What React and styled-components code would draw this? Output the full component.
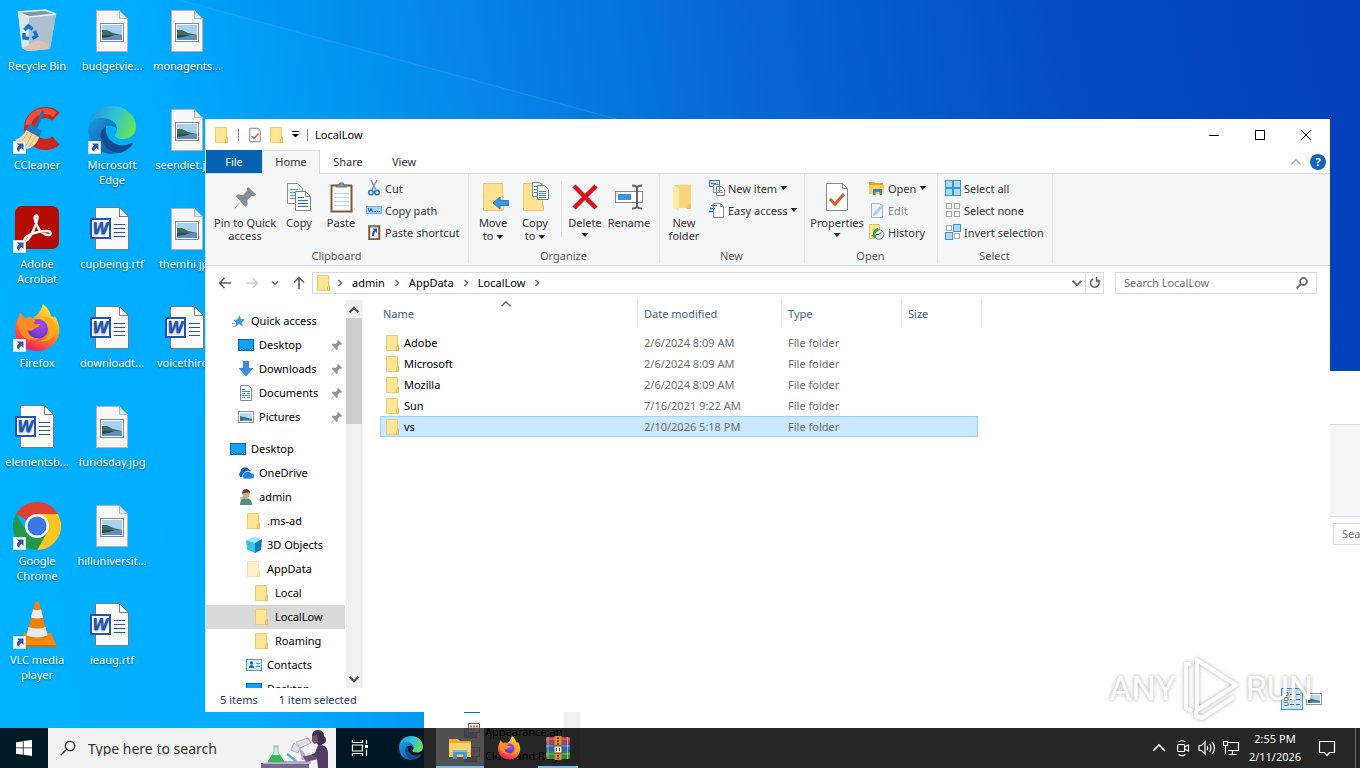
import React from 'react'
import styled, { createGlobalStyle } from 'styled-components'

/* ---------- icons ---------- */

function FolderIcon({ size = 16, faded }) {
  return (
    <svg width={size} height={size} viewBox='0 0 16 16' opacity={faded ? 0.5 : 1} aria-hidden='true'>
      <path d='M1.500 .5h11v9.500h1v5.500h-12z' fill='#ffe596' stroke='#eccb68' />
      <path d='M11.500 15.500v-3l1-2h1v5z' fill='#ffdc7a' stroke='#e5bd4c' />
    </svg>
  )
}

function ShortcutArrow() {
  return (
    <g>
      <rect x='0.5' y='35.5' width='12' height='12' fill='#fff' stroke='#d5dde5' />
      <path d='M4 37.500h6.500V44L8.600 42.100C6.800 43 6.200 44.200 6.400 46 3.200 44.200 3.200 41 6 39.500z' fill='#2c5aa0' />
    </g>
  )
}

function BinIcon() {
  return (
    <svg width='48' height='48' viewBox='0 0 48 48' aria-hidden='true'>
      <path d='M5 5l27-2 11 4-6 35-22 2-6-3z' fill='#c3d6e4' />
      <path d='M5 5l11 5 -1 34-6-3z' fill='#dbe7ef' />
      <path d='M16 10l27-3-6 35-21 2z' fill='#aebfce' />
      <path d='M15 38l10-5 11 4-1 5-19 2-7-3z' fill='#d9c5b8' />
      <path d='M5 5l27-2 11 4-27 3z' fill='#7d98ac' stroke='#e9f4fb' strokeWidth='1.500' />
      <g fill='none' stroke='#1373d1' strokeWidth='3.500'>
        <path d='M11.500 23l4-4 4 3.500' />
        <path d='M21.500 24l2 5-4 2.500' />
        <path d='M16 31.500l-5-.5 0-5' />
      </g>
    </svg>
  )
}

function JpgIcon() {
  return (
    <svg width='48' height='48' viewBox='0 0 48 48' aria-hidden='true'>
      <path d='M8.500 3.500h23l8 8v33h-31z' fill='#f7f7f7' stroke='#b9b4ae' />
      <path d='M31.500 3.500v8h8z' fill='#dff0fa' stroke='#a9b8c2' />
      <rect x='12.500' y='16.500' width='23' height='18' fill='#fff' stroke='#7c8a96' />
      <rect x='14' y='18' width='20' height='15' fill='#a8d1f0' />
      <path d='M14 23l5 0 6 3 9 2v1H14z' fill='#3f6b60' />
      <path d='M14 28h20v5H14z' fill='#5f8fbd' />
      <path d='M14 28h13l-6 2-7 1z' fill='#284a54' />
    </svg>
  )
}

function WordIcon() {
  return (
    <svg width='48' height='48' viewBox='0 0 48 48' aria-hidden='true'>
      <path d='M7.500 2.500h24l9 9v33h-33z' fill='#fafafa' stroke='#77797c' />
      <path d='M31.500 2.500v9h9z' fill='#fff' stroke='#77797c' />
      <path d='M26 19.500h11M26 23.500h11M26 27.500h11M26 31.500h11' stroke='#2b579a' />
      <rect x='3' y='14' width='19' height='19' fill='#fff' stroke='#2155b0' strokeWidth='2' />
      <text x='12.500' y='29' fontFamily='"DejaVu Sans", sans-serif' fontSize='15' fontWeight='700' fontStyle='italic' textAnchor='middle' fill='#2155b0'>W</text>
    </svg>
  )
}

function CCleanerIcon() {
  return (
    <svg width='48' height='48' viewBox='0 0 48 48' aria-hidden='true'>
      <path d='M43 10.500A16 16 0 1 0 43 34.500' fill='none' stroke='#c8281c' strokeWidth='11' />
      <path d='M42 8.500A17 17 0 0 0 15 19' fill='none' stroke='#e8513d' strokeWidth='6' />
      <path d='M30 5l-7 17' stroke='#2173b8' strokeWidth='3' />
      <path d='M17 18l12 7-3 6-13-7z' fill='#1f7cc4' />
      <path d='M13 24l13 7c-1 6-7 11-12 12-5-3-9-7-12-9 5-2 9-5 11-10z' fill='#f6d9a4' />
      <path d='M15 26L8 37M19 28l-6 12M23 30l-7 11' stroke='#d9b27a' />
      <ShortcutArrow />
    </svg>
  )
}

function EdgeIcon({ size = 48, shortcut }) {
  return (
    <svg width={size} height={size} viewBox='0 0 48 48' aria-hidden='true'>
      <defs>
        <linearGradient id='edgeTop' x1='0' y1='.3' x2='1' y2='.6'>
          <stop offset='0' stopColor='#2196dc' />
          <stop offset='.5' stopColor='#2fc0d8' />
          <stop offset='1' stopColor='#6be351' />
        </linearGradient>
        <linearGradient id='edgeLow' x1='0' y1='0' x2='1' y2='1'>
          <stop offset='0' stopColor='#1b9de2' />
          <stop offset='1' stopColor='#0d4f9e' />
        </linearGradient>
      </defs>
      <path d='M0 22C1 9 11 0 24 0c14 0 24 10 24 21 0 8-6 12-13 12-6 0-8-2-8-4 0-1 2-2 2-5 0-5-5-10-13-10C8 14 2 18 0 22z' fill='url(#edgeTop)' />
      <path d='M0 24c0-6 5-12 14-12 9 0 15 5 15 11-2-3-6-4-10-3-5 2-7 8-5 14 2 7 8 13 16 13C14 51 0 40 0 24z' fill='url(#edgeLow)' />
      <path d='M18 20c-5 3-7 9-4 15 3 8 10 12 17 12 6-1 11-5 14-9 0-1-1-1-2-1-4 2-8 3-12 2-9-2-14-9-13-19z' fill='#114a93' />
      {shortcut && <ShortcutArrow />}
    </svg>
  )
}

function AcrobatIcon() {
  return (
    <svg width='48' height='48' viewBox='0 0 48 48' aria-hidden='true'>
      <rect x='2' y='1' width='44' height='43' rx='7' fill='#b30b00' />
      <path d='M23.500 10.500c-3 0-2 5 .5 10 2 5 7 10 12 9.500 3-.5 2-4-2-4-6 0-12 1.500-17 3.500-4 2-6.500 4.500-5 6 2 1.500 6-4.500 9-11.500 2.500-6 5-13.500 2.500-13.500z' fill='none' stroke='#fff' strokeWidth='2.400' />
      <ShortcutArrow />
    </svg>
  )
}

function FirefoxIcon({ size = 48, shortcut }) {
  return (
    <svg width={size} height={size} viewBox='0 0 48 48' aria-hidden='true'>
      <defs>
        <linearGradient id='foxBody' x1='.8' y1='0' x2='.3' y2='1'>
          <stop offset='0' stopColor='#fff044' />
          <stop offset='.35' stopColor='#ffb320' />
          <stop offset='.65' stopColor='#ff6a2b' />
          <stop offset='1' stopColor='#f5156c' />
        </linearGradient>
        <radialGradient id='foxGlobe' cx='.6' cy='.3' r='.8'>
          <stop offset='0' stopColor='#b04ae8' />
          <stop offset='1' stopColor='#5038c8' />
        </radialGradient>
      </defs>
      <path d='M30 0c6 5 7 8 8 12 2 1 3 2 4 0 4 7 5 12 4 18-2 10-11 17-22 17C12 47 2 38 2 26c0-5 1-9 4-13l1-4 5 5c3-1 6-1 8 0 4-2 8-7 10-14z' fill='url(#foxBody)' />
      <circle cx='25' cy='25' r='10' fill='url(#foxGlobe)' />
      <path d='M5 14l2-5 5 5c5-1 8 0 11 3-2 1-3 2-1 3h5c-1 4-4 3-6 5-2 2-6 3-7-1 0 7 5 11 13 10-6 4-17 2-20-6-2-5-3-9-2-14z' fill='#ff8a26' />
      <path d='M27 13c7 1 10 7 10 12 0 7-5 12-12 12 10 2 18-4 18-13 0-7-6-13-16-11z' fill='#ffab21' />
      {shortcut && <ShortcutArrow />}
    </svg>
  )
}

function ChromeIcon() {
  return (
    <svg width='48' height='48' viewBox='0 0 48 48' aria-hidden='true'>
      <path d='M24 24L3.200 12A24 24 0 0 1 44.800 12z' fill='#de4032' />
      <path d='M24 12h20.800A24 24 0 0 1 24 48l10.400-18z' fill='#fcc51f' />
      <path d='M34.400 30L24 48A24 24 0 0 1 3.200 12l10.400 18z' fill='#229a48' />
      <circle cx='24' cy='24' r='12' fill='#fff' />
      <circle cx='24' cy='24' r='9.500' fill='#3b78e7' />
      <ShortcutArrow />
    </svg>
  )
}

function VlcIcon() {
  return (
    <svg width='48' height='48' viewBox='0 0 48 48' aria-hidden='true'>
      <path d='M11 32h27l6 14H4z' fill='#f58a0b' />
      <path d='M4 44h40v2H4z' fill='#d96d00' />
      <path d='M22 1q2-1.500 4 0l9 36q-11 6-22 0z' fill='#f07f0c' />
      <path d='M20 8.500q4 1.500 8 0l2 8q-6 2-12 0z' fill='#f1f1f1' />
      <path d='M15.500 26q8.500 3 17 0l2 8.500q-10.500 4-21 0z' fill='#e9e9e9' />
      <ShortcutArrow />
    </svg>
  )
}

function PinIcon({ size = 11, color = '#8c9298' }) {
  return (
    <svg width={size} height={size} viewBox='0 0 20 20' aria-hidden='true'>
      <path d='M13 0l7 7-2 1.500-2-.5-4 4 .5 4-2 2-4.500-4.500L1 19.500.5 19 6 13 1.500 8.500l2-2 4.500 1 4-4-.5-2z' fill={color} />
    </svg>
  )
}

function CopyIcon() {
  return (
    <svg width='32' height='32' viewBox='0 0 32 32' aria-hidden='true'>
      <path d='M4.500 2.500h10l5 5v15h-15z' fill='#fff' stroke='#8b9097' />
      <path d='M7 8.500h8M7 11.500h8M7 14.500h8M7 17.500h8' stroke='#4ba0e0' />
      <path d='M12.500 10.500h10l5 5v14h-15z' fill='#fff' stroke='#7c8188' />
      <path d='M22.500 10.500v5h5' fill='none' stroke='#7c8188' />
      <path d='M15 16.500h6M15 19.500h10M15 22.500h10M15 25.500h10' stroke='#1e78d0' />
    </svg>
  )
}

function PasteIcon({ size = 32, link }) {
  return (
    <svg width={size} height={size} viewBox='0 0 32 32' aria-hidden='true'>
      <rect x='6.500' y='4.500' width='20' height='26' fill='#fafcff' stroke='#7f5a36' strokeWidth={link ? 4 : 2} />
      <path d='M11 6V4h3l1-2h3l1 2h3v2z' fill='#8a9198' stroke='#6c7176' />
      {!link && <path d='M9 12.500h15M9 16.500h15M9 20.500h15M9 24.500h15' stroke='#b9d7ef' />}
      {link && <path d='M13 9h9v9l-3-3c-2 2-2 5-3 9h-4c0-6 1-9 4-12z' fill='#2b55b4' />}
    </svg>
  )
}

function CutIcon() {
  return (
    <svg width='16' height='16' viewBox='0 0 16 16' aria-hidden='true'>
      <path d='M11 0L6 10M5 0l5 10' stroke='#8796a6' strokeWidth='1.500' />
      <circle cx='5' cy='12.500' r='2.300' fill='none' stroke='#2d7ec4' strokeWidth='1.600' />
      <circle cx='11' cy='12.500' r='2.300' fill='none' stroke='#2d7ec4' strokeWidth='1.600' />
    </svg>
  )
}

function PathIcon() {
  return (
    <svg width='16' height='16' viewBox='0 0 16 16' aria-hidden='true'>
      <rect x='.5' y='4.500' width='15' height='7' fill='#a8d6fb' stroke='#6bb1e8' />
      <path d='M2 6l1.500 4L5 6.500 6.500 10l.5-1M8.500 9.500h1.500M11 9.500h1.500M13 9.500h1' fill='none' stroke='#12487d' />
    </svg>
  )
}

function MoveToIcon() {
  return (
    <svg width='32' height='32' viewBox='0 0 32 32' aria-hidden='true'>
      <path d='M6.500 2.500h19v22h1v5h-20z' fill='#ffe390' stroke='#e7c769' />
      <path d='M16 22l7-6v3.500h9v5h-9V28z' fill='#3f97dd' stroke='#277cc4' />
    </svg>
  )
}

function CopyToIcon() {
  return (
    <svg width='32' height='32' viewBox='0 0 32 32' aria-hidden='true'>
      <path d='M4.500 2.500h19v22h1v5h-20z' fill='#ffe390' stroke='#e7c769' />
      <path d='M13.500 1.500h7l3 3v11h-10z' fill='#fff' stroke='#7b8794' />
      <path d='M18.500 4.500h7l4 4v10h-11z' fill='#fff' stroke='#5d7fa4' />
      <path d='M20 10.500h7M20 12.500h7M20 14.500h7M20 16.500h7M15 5.500h3M15 8.500h3M15 11.500h3' stroke='#3a85cc' />
    </svg>
  )
}

function DeleteIcon() {
  return (
    <svg width='32' height='32' viewBox='0 0 32 32' aria-hidden='true'>
      <path d='M5 5l22 22M27 5L5 27' stroke='#d9101b' strokeWidth='4.500' />
    </svg>
  )
}

function RenameIcon() {
  return (
    <svg width='32' height='32' viewBox='0 0 32 32' aria-hidden='true'>
      <rect x='2.500' y='10.500' width='27' height='11' fill='#fff' stroke='#7d858d' />
      <rect x='5' y='13' width='13' height='6' fill='#3b96e0' />
      <path d='M19 4.500q5 0 5 3v17q0 3-5 3M29 4.500q-5 0-5 3v17q0 3 5 3' fill='none' stroke='#5e656d' strokeWidth='2' />
    </svg>
  )
}

function NewFolderIcon() {
  return (
    <svg width='32' height='32' viewBox='0 0 32 32' aria-hidden='true'>
      <path d='M6 4l8-.5h9V27H10z' fill='#f8d67b' />
      <path d='M5 4l6 3v23l-6-3z' fill='#ffe9a6' />
      <path d='M21 22l2 2v4h-4z' fill='#efc55a' />
    </svg>
  )
}

function NewItemIcon() {
  return (
    <svg width='16' height='16' viewBox='0 0 16 16' aria-hidden='true'>
      <rect x='.5' y='.5' width='10' height='6' fill='#d7ecf8' stroke='#437d9b' />
      <path d='M2 3.500h5' stroke='#2c91b8' />
      <path d='M4.500 4.500h6v8h-6zM7.500 6.500h5l3 3v6h-8z' fill='#fff' stroke='#738393' />
      <path d='M9 10.500h4M9 12.500h5' stroke='#dc7468' />
    </svg>
  )
}

function EasyIcon() {
  return (
    <svg width='16' height='16' viewBox='0 0 16 16' aria-hidden='true'>
      <path d='M4.500 1.500h7l3 3v11h-10z' fill='#fff' stroke='#858b92' />
      <path d='M11.500 1.500v3h3' fill='none' stroke='#858b92' />
      <path d='M2 3.500h6M1 6.500h5M0 9.500h4' stroke='#2a6cb5' strokeWidth='1.400' />
    </svg>
  )
}

function PropsIcon({ size = 32 }) {
  return (
    <svg width={size} height={size} viewBox='0 0 32 32' aria-hidden='true'>
      <path d='M5.500 2.500h16l5 5v22h-21z' fill='#fff' stroke='#84898f' strokeWidth={size < 20 ? 2 : 1} />
      <path d='M21.500 2.500v5h5' fill='none' stroke='#84898f' />
      <path d='M9 18l5 5 9-10' fill='none' stroke='#e35a2c' strokeWidth='3' />
    </svg>
  )
}

function OpenIcon() {
  return (
    <svg width='16' height='16' viewBox='0 0 16 16' aria-hidden='true'>
      <path d='M0 2h5l1 1h8v3H0z' fill='#e2a32c' />
      <path d='M0 5h15v9H0z' fill='#fbcf57' />
      <path d='M4 15V9h9v6h-2.500v-3h-4v3z' fill='#3c84c4' />
    </svg>
  )
}

function EditIcon() {
  return (
    <svg width='16' height='16' viewBox='0 0 16 16' aria-hidden='true'>
      <path d='M2.500 1.500h8l3 3v11h-11z' fill='#eef3f8' stroke='#a7b6c6' />
      <path d='M4 14l1-4 8-8 2 2-7 8z' fill='#b9cbe0' />
    </svg>
  )
}

function HistoryIcon() {
  return (
    <svg width='16' height='16' viewBox='0 0 16 16' aria-hidden='true'>
      <path d='M.5 .5h10v14H.500z' fill='#ffe79b' stroke='#e3c363' />
      <circle cx='10' cy='10.500' r='4.800' fill='#e4ebf0' stroke='#727c84' />
      <path d='M10 10.500l3-3M10 10.500h-3' stroke='#4a545c' />
      <path d='M9 4a6 6 0 0 0-5 7H2l3.500 3.500L8 11H6.500a4 4 0 0 1 3-4z' fill='#37a437' />
    </svg>
  )
}

function SelectIcon({ on }) {
  const cells = [[0.5, 0.5], [8.5, 0.5], [0.5, 8.5], [8.5, 8.5]]
  return (
    <svg width='16' height='16' viewBox='0 0 16 16' aria-hidden='true'>
      {cells.map(([x, y], i) => on[i]
        ? <rect key={i} x={x} y={y} width='7' height='7' fill='#a9d9fb' stroke='#3a93d6' />
        : <rect key={i} x={x + 1} y={y + 1} width='5' height='5' fill='#fff' stroke='#a4aab0' />)}
    </svg>
  )
}

function StarIcon() {
  return (
    <svg width='16' height='16' viewBox='0 0 16 16' aria-hidden='true'>
      <path d='M9.500 2l1.300 4L15 6.500 12 9l.7 4.500L9 11l-4 3 1-4.500-3-2.500 4.300-.5z' fill='#3e9be0' />
      <path d='M2 10.500h3M3 13.500h2' stroke='#83c0ee' />
    </svg>
  )
}

function ScreenIcon() {
  return (
    <svg width='16' height='16' viewBox='0 0 16 16' aria-hidden='true'>
      <rect x='.5' y='2.500' width='15' height='11' fill='#10a0fa' stroke='#0b6cb8' />
      <path d='M1 12.500h14' stroke='#0d7fcc' />
      <path d='M2 12.500h1M12 12.500h1M14 12.500h1' stroke='#fff' />
    </svg>
  )
}

function DownIcon() {
  return (
    <svg width='16' height='16' viewBox='0 0 16 16' aria-hidden='true'>
      <path d='M5 0h6v7h4.500L8 15.500.5 7H5z' fill='#3a8edb' />
    </svg>
  )
}

function DocsIcon() {
  return (
    <svg width='16' height='16' viewBox='0 0 16 16' aria-hidden='true'>
      <path d='M2.500 .5h8l3 3v12h-11z' fill='#fff' stroke='#7d8994' />
      <path d='M4 4.500h3M4 6.500h8M4 8.500h3M9 8.500h3M4 10.500h8M4 12.500h3M9 12.500h3' stroke='#2f8fd0' />
    </svg>
  )
}

function PicsIcon() {
  return (
    <svg width='16' height='16' viewBox='0 0 16 16' aria-hidden='true'>
      <rect x='.5' y='2.500' width='15' height='11' fill='#fff' stroke='#8a959e' />
      <rect x='2' y='4' width='12' height='8' fill='#b5dbf3' />
      <path d='M2 7l4 1 8 2v2H2z' fill='#3c6f8c' />
      <path d='M6 10.500l8 .5v1H4z' fill='#6ea3c9' />
    </svg>
  )
}

function CloudIcon() {
  return (
    <svg width='16' height='16' viewBox='0 0 16 16' aria-hidden='true'>
      <path d='M2.500 12A3 3 0 0 1 2.500 7 4.500 4.500 0 0 1 10 3.500L13 6 5 12z' fill='#0a64b8' />
      <path d='M6.500 14a3 3 0 0 1-.5-5.500 4 4 0 0 1 7-.5 3 3 0 0 1 1 6z' fill='#1484dc' stroke='#fff' strokeWidth='.8' />
    </svg>
  )
}

function PersonIcon() {
  return (
    <svg width='16' height='16' viewBox='0 0 16 16' aria-hidden='true'>
      <path d='M2 16q0-6 4-6.500h4q4 .5 4 6.500z' fill='#4e9573' />
      <circle cx='8' cy='5.500' r='3.500' fill='#d3a883' />
      <path d='M4 5q0-5 4.500-5Q12 .5 12 4.500L10.500 3.500 6 4z' fill='#4c4542' />
      <path d='M2 8h5v8H4z' fill='#6a7a74' opacity='.5' />
    </svg>
  )
}

function CubeIcon() {
  return (
    <svg width='16' height='16' viewBox='0 0 16 16' aria-hidden='true'>
      <path d='M0 3l8-3 8 2-7 4z' fill='#9ee9f7' />
      <path d='M0 3l9 3v10L1 12.500z' fill='#35c3e6' />
      <path d='M9 6l7-4-1 11-6 3z' fill='#1179b8' />
    </svg>
  )
}

function ContactIcon() {
  return (
    <svg width='16' height='16' viewBox='0 0 16 16' aria-hidden='true'>
      <rect x='.5' y='2.500' width='15' height='11' fill='#d4ebf8' stroke='#5b9dc6' />
      <path d='M3 11q0-3 2.500-3T8 11z' fill='#2d6b8e' />
      <circle cx='5.500' cy='6' r='1.700' fill='#2d6b8e' />
      <path d='M10 6.500h4M10 9.500h4' stroke='#4f93c0' />
    </svg>
  )
}

function PanelIcon() {
  return (
    <svg width='16' height='16' viewBox='0 0 16 16' aria-hidden='true'>
      <path d='M.5 5.500h12v9H.500z' fill='#5f9ed0' stroke='#3b6f9d' />
      <path d='M4.500 .5h11v9h-11z' fill='#fff' stroke='#b8452f' />
      <path d='M6 3.500h2M9 3.500h2M12 3.500h2M6 6.500h2M9 6.500h2' stroke='#d0583f' strokeWidth='2' />
    </svg>
  )
}

function ArrowIcon({ turn = 0, color = '#5f6368' }) {
  return (
    <svg width='14' height='14' viewBox='0 0 14 14' aria-hidden='true'>
      <path d='M13 7H2M6.500 2L1.500 7l5 5' transform={`rotate(${turn} 7 7)`} fill='none' stroke={color} strokeWidth='1.700' />
    </svg>
  )
}

function ChevronIcon({ turn = 0, size = 8, color = '#6b6f73', weight = 1.5 }) {
  return (
    <svg width={size} height={size} viewBox='0 0 8 8' aria-hidden='true'>
      <path d='M2.500 1l3 3-3 3' transform={`rotate(${turn} 4 4)`} fill='none' stroke={color} strokeWidth={weight} />
    </svg>
  )
}

function MagnifierIcon({ size = 12, color = '#6f6f6f', weight = 1.8 }) {
  return (
    <svg width={size} height={size} viewBox='0 0 12 12' aria-hidden='true'>
      <circle cx='7.500' cy='4.500' r='3.500' fill='none' stroke={color} strokeWidth={weight} />
      <path d='M5 7L.5 11.500' stroke={color} strokeWidth={weight} />
    </svg>
  )
}

function RefreshIcon() {
  return (
    <svg width='12' height='12' viewBox='0 0 12 12' aria-hidden='true'>
      <path d='M8.500 2.500A4.300 4.300 0 1 1 4 2' fill='none' stroke='#5c6064' strokeWidth='1.500' />
      <path d='M7.500 0v4h4' fill='none' stroke='#5c6064' strokeWidth='1.500' />
    </svg>
  )
}

function StartIcon() {
  return (
    <svg width='16' height='16' viewBox='0 0 16 16' aria-hidden='true'>
      <path d='M0 2.200l6.800-1v6.300H0zM7.600 1.100L16 0v7.500H7.600zM0 8.300h6.800v6.400l-6.800-1zM7.600 8.300H16V16l-8.400-1.200z' fill='#fff' />
    </svg>
  )
}

function LabArt() {
  return (
    <svg width='74' height='40' viewBox='0 0 74 40' aria-hidden='true'>
      <path d='M1 35h48v5H1z' fill='#7a6894' />
      <path d='M3 35l12-2h36v3H3z' fill='#b8acc9' />
      <path d='M13 18h6M14 19v5l-6 10h16l-6-10v-5z' fill='#d5efe9' stroke='#93b9b6' />
      <path d='M12 27h8l4 6q0 1-1 1H9q-1 0-1-1z' fill='#38b557' />
      <path d='M27 26l9 7' stroke='#5aaeea' strokeWidth='2.500' />
      <path d='M36 14l12-4 3 5-11 5zM34 15l-3 7 7 3 2-5z' fill='#e3deea' stroke='#b7afc4' />
      <path d='M40 21q6 3 6 11h-4l-2-8' fill='#b3a9c4' />
      <path d='M52 8q0-6 6-6t6 6q2 1 2 4t-3 4q-2 2-5 1l-1-2q-3 0-3-3z' fill='#3f304f' />
      <path d='M52 8q3 0 5-2l1 8-4 2-2-3z' fill='#715168' />
      <path d='M58 17q9-1 10 7v16H58l-1-9-9 1-2-3 9-4z' fill='#4f3c68' />
      <path d='M43 28l11-1 4 4-12 3z' fill='#6b5279' />
    </svg>
  )
}

function TaskViewIcon() {
  return (
    <svg width='18' height='16' viewBox='0 0 18 16' aria-hidden='true'>
      <path d='M1.500 0v2.500h10V0M1.500 16v-2.500h10V16M1.500 5h10v6h-10zM15.500 0v4M15.500 9.500V16' fill='none' stroke='#fff' strokeWidth='1.200' />
      <path d='M14 5h3v3h-3z' fill='#fff' />
    </svg>
  )
}

function ExplorerIcon() {
  return (
    <svg width='24' height='24' viewBox='0 0 24 24' aria-hidden='true'>
      <path d='M1 3h9l2 2h11v4H1z' fill='#f0a92e' />
      <path d='M1 7h22v14H1z' fill='#fdd367' />
      <path d='M1 16h22v5H1z' fill='#f9c344' />
      <path d='M5 23v-9h14v9h-4v-4.500H9V23z' fill='#3f97d5' />
      <path d='M5 14h14v2H5z' fill='#75bdf0' />
    </svg>
  )
}

function RarIcon() {
  return (
    <svg width='24' height='24' viewBox='0 0 24 24' aria-hidden='true'>
      <rect x='0' y='1' width='24' height='7' rx='1' fill='#b43a5b' />
      <rect x='0' y='8' width='24' height='7' rx='1' fill='#3360b5' />
      <rect x='0' y='15' width='24' height='8' rx='1' fill='#2f8c3c' />
      <path d='M0 3h24M0 10h24M0 18h24' stroke='#fff' strokeOpacity='.4' />
      <path d='M2 1v22M21.500 1v22' stroke='#e9d374' strokeOpacity='.7' />
      <rect x='8.500' y='0' width='7' height='24' fill='#dd8f2f' />
      <path d='M12 1v22' stroke='#754319' strokeDasharray='2 1' strokeWidth='2' />
      <rect x='8' y='10' width='8' height='7' fill='#f4f0e6' stroke='#55504b' />
      <path d='M10.500 12v3M13.500 12v3' stroke='#333' />
    </svg>
  )
}

function CameraIcon() {
  return (
    <svg width='16' height='18' viewBox='0 0 16 18' aria-hidden='true'>
      <rect x='2.600' y='5.500' width='7' height='7' rx='1' fill='none' stroke='#fff' strokeWidth='1.200' />
      <path d='M9.500 8l4-2v6l-4-2M3.500 3Q7 .5 10.500 3M3.500 15.500Q7 18 10.500 15.500' fill='none' stroke='#fff' strokeWidth='1.100' />
    </svg>
  )
}

function SpeakerIcon() {
  return (
    <svg width='18' height='16' viewBox='0 0 18 16' aria-hidden='true'>
      <path d='M1 5.500h2.500L7 2v12l-3.500-3.500H1zM9 6q1.500 2 0 4M11.500 4q3 4 0 8M14 2q5 6 0 12' fill='none' stroke='#fff' strokeWidth='1.200' />
    </svg>
  )
}

function NetworkIcon() {
  return (
    <svg width='18' height='16' viewBox='0 0 18 16' aria-hidden='true'>
      <path d='M5 2.500h11.500v8H6M1.500 1.500h4v4h-4zM3.500 5.500v8.500M6.500 14.500h8M10.500 10.500v4' fill='none' stroke='#fff' strokeWidth='1.200' />
    </svg>
  )
}

function NoteIcon() {
  return (
    <svg width='18' height='18' viewBox='0 0 18 18' aria-hidden='true'>
      <path d='M1.500 2.500h15v11h-5L9 16.500l-2.500-3h-5z' fill='none' stroke='#fff' strokeWidth='1.200' />
    </svg>
  )
}

function DetailsIcon() {
  return (
    <svg width='16' height='16' viewBox='0 0 16 16' aria-hidden='true'>
      <path d='M0 1.500h4v3H0zM0 6.500h4v3H0zM0 11.500h4v3H0z' fill='#fff' stroke='#857b78' />
      <path d='M6 3.500h4M12 3.500h4M6 8.500h4M12 8.500h4M6 13.500h4M12 13.500h4' stroke='#59646e' />
    </svg>
  )
}

/* ---------- data ---------- */

const shortcuts = [
  ['Recycle Bin', <BinIcon />],
  ['CCleaner', <CCleanerIcon />],
  ['Adobe Acrobat', <AcrobatIcon />],
  ['Firefox', <FirefoxIcon shortcut />],
  ['elementsb...', <WordIcon />],
  ['Google Chrome', <ChromeIcon />],
  ['VLC media player', <VlcIcon />],
  ['budgetvie...', <JpgIcon />],
  ['Microsoft Edge', <EdgeIcon shortcut />],
  ['cupbeing.rtf', <WordIcon />],
  ['downloadt...', <WordIcon />],
  ['fundsday.jpg', <JpgIcon />],
  ['hilluniversit...', <JpgIcon />],
  ['ieaug.rtf', <WordIcon />],
  ['monagents...', <JpgIcon />],
  ['seendiet.jpg', <JpgIcon />],
  ['themhi.jpg', <JpgIcon />],
  ['voicethird...', <WordIcon />],
]

const quick = [
  { name: 'Quick access', icon: <StarIcon />, level: 0 },
  { name: 'Desktop', icon: <ScreenIcon />, level: 1, pin: true },
  { name: 'Downloads', icon: <DownIcon />, level: 1, pin: true },
  { name: 'Documents', icon: <DocsIcon />, level: 1, pin: true },
  { name: 'Pictures', icon: <PicsIcon />, level: 1, pin: true },
]

const tree = [
  { name: 'Desktop', icon: <ScreenIcon />, level: 0 },
  { name: 'OneDrive', icon: <CloudIcon />, level: 1 },
  { name: 'admin', icon: <PersonIcon />, level: 1 },
  { name: '.ms-ad', icon: <FolderIcon />, level: 2 },
  { name: '3D Objects', icon: <CubeIcon />, level: 2 },
  { name: 'AppData', icon: <FolderIcon faded />, level: 2 },
  { name: 'Local', icon: <FolderIcon />, level: 3 },
  { name: 'LocalLow', icon: <FolderIcon />, level: 3, active: true },
  { name: 'Roaming', icon: <FolderIcon />, level: 3 },
  { name: 'Contacts', icon: <ContactIcon />, level: 2 },
  { name: 'Desktop', icon: <ScreenIcon />, level: 2 },
]

const files = [
  ['Adobe', '2/6/2024 8:09 AM'],
  ['Microsoft', '2/6/2024 8:09 AM'],
  ['Mozilla', '2/6/2024 8:09 AM'],
  ['Sun', '7/16/2021 9:22 AM'],
  ['vs', '2/10/2026 5:18 PM'],
]

/* ---------- parts ---------- */

const Big = ({ icon, lines, width, caret }) => (
  <BigButton type='button' $width={width}>
    {icon}
    {lines.map((line, i) => (
      <span key={line}>{line}{caret && i === 1 && <Caret />}</span>
    ))}
    {caret && lines.length === 1 && <Caret />}
  </BigButton>
)

const Small = ({ icon, label, caret, dim }) => (
  <SmallButton type='button' $dim={dim}>{icon}<span>{label}</span>{caret && <Caret />}</SmallButton>
)

const NavRow = ({ item }) => (
  <NavItem href='#' $level={item.level} $active={item.active}>
    {item.icon}
    <span>{item.name}</span>
    {item.pin && <PinIcon />}
  </NavItem>
)

const Ribbon = () => (
  <RibbonBar>
    <Group>
      <GroupBody>
        <Big icon={<BigPin><PinIcon size={22} color='#868d94' /></BigPin>} lines={['Pin to Quick', 'access']} width={68} />
        <Big icon={<CopyIcon />} lines={['Copy']} width={40} />
        <Big icon={<PasteIcon />} lines={['Paste']} width={44} />
        <Stack $gap={3} $width={96}>
          <Small icon={<CutIcon />} label='Cut' />
          <Small icon={<PathIcon />} label='Copy path' />
          <Small icon={<PasteIcon size={16} link />} label='Paste shortcut' />
        </Stack>
      </GroupBody>
      <GroupName>Clipboard</GroupName>
    </Group>
    <Group>
      <GroupBody>
        <Big icon={<MoveToIcon />} lines={['Move', 'to']} width={38} caret />
        <Big icon={<CopyToIcon />} lines={['Copy', 'to']} width={46} caret />
        <Divider />
        <Big icon={<DeleteIcon />} lines={['Delete']} width={40} caret />
        <Big icon={<RenameIcon />} lines={['Rename']} width={48} />
      </GroupBody>
      <GroupName>Organize</GroupName>
    </Group>
    <Group>
      <GroupBody>
        <Big icon={<NewFolderIcon />} lines={['New', 'folder']} width={38} />
        <Stack $gap={6} $width={89}>
          <Small icon={<NewItemIcon />} label='New item' caret />
          <Small icon={<EasyIcon />} label='Easy access' caret />
        </Stack>
      </GroupBody>
      <GroupName>New</GroupName>
    </Group>
    <Group>
      <GroupBody>
        <Big icon={<PropsIcon />} lines={['Properties']} width={54} caret />
        <Stack $gap={5} $width={62}>
          <Small icon={<OpenIcon />} label='Open' caret />
          <Small icon={<EditIcon />} label='Edit' dim />
          <Small icon={<HistoryIcon />} label='History' />
        </Stack>
      </GroupBody>
      <GroupName>Open</GroupName>
    </Group>
    <Group>
      <GroupBody>
        <Stack $gap={2} $width={101}>
          <Small icon={<SelectIcon on={[1, 1, 1, 1]} />} label='Select all' />
          <Small icon={<SelectIcon on={[0, 0, 0, 0]} />} label='Select none' />
          <Small icon={<SelectIcon on={[0, 1, 1, 0]} />} label='Invert selection' />
        </Stack>
      </GroupBody>
      <GroupName>Select</GroupName>
    </Group>
  </RibbonBar>
)

const Explorer = () => (
  <Window>
    <TitleBar>
      <QuickBar>
        <FolderIcon />
        <Tick />
        <PropsIcon size={16} />
        <FolderIcon />
        <MenuMark width='7' height='7' viewBox='0 0 7 7'><path d='M0 .5h7' stroke='#000' /><path d='M0 3h7L3.500 6.500z' /></MenuMark>
        <Tick />
      </QuickBar>
      <h1>LocalLow</h1>
      <Controls>
        <button type='button' aria-label='Minimize'><svg width='10' height='10'><path d='M0 5.500h10' stroke='#000' /></svg></button>
        <button type='button' aria-label='Maximize'><svg width='10' height='10'><rect x='.5' y='.5' width='9' height='9' fill='none' stroke='#000' /></svg></button>
        <button type='button' aria-label='Close'><svg width='10' height='10'><path d='M0 0l10 10M10 0L0 10' stroke='#000' /></svg></button>
      </Controls>
    </TitleBar>
    <Tabs>
      <Tab type='button' $file>File</Tab>
      <Tab type='button' $open>Home</Tab>
      <Tab type='button'>Share</Tab>
      <Tab type='button'>View</Tab>
      <Help>
        <ChevronIcon turn={-90} size={12} color='#a5a9ad' weight={1} />
        <button type='button'>?</button>
      </Help>
    </Tabs>
    <Ribbon />
    <AddressRow>
      <Arrows>
        <button type='button' aria-label='Back'><ArrowIcon /></button>
        <button type='button' aria-label='Forward'><ArrowIcon turn={180} color='#d0d3d6' /></button>
        <button type='button' aria-label='Recent'><ChevronIcon turn={90} /></button>
        <button type='button' aria-label='Up'><ArrowIcon turn={90} /></button>
      </Arrows>
      <Address>
        <FolderIcon />
        <ChevronIcon />
        <a href='#'>admin</a><ChevronIcon />
        <a href='#'>AppData</a><ChevronIcon />
        <a href='#'>LocalLow</a><ChevronIcon />
        <AddressEnd>
          <ChevronIcon turn={90} size={12} weight={1.2} />
          <button type='button' aria-label='Refresh'><RefreshIcon /></button>
        </AddressEnd>
      </Address>
      <SearchBox>
        <input type='text' aria-label='Search LocalLow' placeholder='Search LocalLow' />
        <MagnifierIcon />
      </SearchBox>
    </AddressRow>
    <Body>
      <Nav>
        {quick.map(item => <NavRow key={item.name} item={item} />)}
        <NavGap />
        {tree.map((item, i) => <NavRow key={i} item={item} />)}
      </Nav>
      <Scroll>
        <ChevronIcon turn={-90} size={12} color='#505050' />
        <Thumb />
        <ChevronIcon turn={90} size={12} color='#505050' />
      </Scroll>
      <FilePane>
        <FileTable>
          <thead>
            <tr>
              <th>Name<SortMark><ChevronIcon turn={-90} size={12} weight={1} /></SortMark></th>
              <th>Date modified</th>
              <th>Type</th>
              <th>Size</th>
              <th />
            </tr>
          </thead>
          <tbody>
            {files.map(([name, date]) => (
              <FileRow key={name} $picked={name === 'vs'}>
                <td><Entry><FolderIcon />{name}</Entry></td>
                <td>{date}</td>
                <td>File folder</td>
                <td />
              </FileRow>
            ))}
          </tbody>
        </FileTable>
      </FilePane>
    </Body>
    <Status>
      <span>5 items</span>
      <span>1 item selected</span>
      <Views>
        <ViewButton type='button' aria-label='Details' $on><DetailsIcon /></ViewButton>
        <ViewButton type='button' aria-label='Large icons'><PicsIcon /></ViewButton>
      </Views>
    </Status>
  </Window>
)

const BackWindow = () => (
  <RearWindow>
    <RearTop />
    <RearRibbon />
    <RearAddress>
      <SearchBox $rear><input type='text' aria-label='Search' placeholder='Search' /></SearchBox>
    </RearAddress>
    <Body>
      <RearNav>
        <RearItem href='#'><ScreenIcon /></RearItem>
        <RearItem href='#'><PanelIcon /><span>Appearance an</span></RearItem>
        <RearItem href='#'><PanelIcon /><span>Clock and Reg</span></RearItem>
      </RearNav>
      <Scroll />
    </Body>
  </RearWindow>
)

const Taskbar = () => (
  <Bar>
    <TaskButton type='button' aria-label='Start'><StartIcon /></TaskButton>
    <TaskSearch>
      <MagnifierIcon size={16} color='#222' weight={1} />
      <input type='text' aria-label='Type here to search' placeholder='Type here to search' />
      <LabArt />
    </TaskSearch>
    <TaskButton type='button' aria-label='Task View'><TaskViewIcon /></TaskButton>
    <Apps>
      <TaskButton type='button' aria-label='Edge'><EdgeIcon size={24} /></TaskButton>
      <TaskButton type='button' aria-label='File Explorer' $active><ExplorerIcon /></TaskButton>
      <TaskButton type='button' aria-label='Firefox'><FirefoxIcon size={24} /></TaskButton>
      <TaskButton type='button' aria-label='WinRAR' $running><RarIcon /></TaskButton>
    </Apps>
    <Tray>
      <button type='button' aria-label='Hidden icons'><ChevronIcon turn={-90} size={16} color='#fff' weight={0.8} /></button>
      <button type='button' aria-label='Camera'><CameraIcon /></button>
      <button type='button' aria-label='Volume'><SpeakerIcon /></button>
      <button type='button' aria-label='Network'><NetworkIcon /></button>
      <Clock><span>2:55 PM</span><span>2/11/2026</span></Clock>
      <NoteButton type='button' aria-label='Notifications'><NoteIcon /></NoteButton>
    </Tray>
  </Bar>
)

const App = () => (
  <Screen>
    <GlobalStyle />
    <Rays aria-hidden='true'>
      <path d='M180 0L620 120' stroke='#5cc4ff' strokeOpacity='.25' />
      <path d='M180 0L620 120H1360V0z' fill='#0a50c8' fillOpacity='.06' />
    </Rays>
    <Icons>
      {shortcuts.map(([name, icon]) => (
        <Shortcut key={name} href='#'>{icon}<span>{name}</span></Shortcut>
      ))}
    </Icons>
    <BackWindow />
    <Explorer />
    <Watermark>
      <span>ANY</span>
      <svg width='60' height='64' viewBox='0 0 60 64' aria-hidden='true'>
        <path d='M16 4l39 25-39 25zM10 8H5v44l6 3M15 55v5l6 2 32-21' fill='none' stroke='#fff' strokeWidth='4' strokeLinejoin='round' />
      </svg>
      <span>RUN</span>
    </Watermark>
    <Taskbar />
  </Screen>
)

export default App

/* ---------- styles ---------- */

const GlobalStyle = createGlobalStyle`
  * { box-sizing: border-box; }
  body {
    margin: 0;
    overflow: hidden;
    font-family: 'Noto Sans', 'Open Sans', sans-serif;
    font-size: 11px;
    line-height: 15px;
    color: #000;
  }
  button, input { font: inherit; color: inherit; margin: 0; padding: 0; border: 0; background: none; }
  a { color: inherit; text-decoration: none; }
  h1 { margin: 0; font: inherit; }
  svg { flex: none; display: block; }
`

const Screen = styled.main`
  position: relative;
  min-height: 100vh;
  overflow: hidden;
  background: linear-gradient(80deg, #00b3ff 0%, #00acff 18%, #058aea 38%, #0669d8 58%, #044bc6 80%, #033fba 100%);
`

const Rays = styled.svg`
  position: absolute;
  inset: 0;
  width: 100%;
  height: 100%;
`

const Icons = styled.nav`
  position: relative;
  display: grid;
  grid-template-rows: repeat(7, 99px);
  grid-auto-columns: 75px;
  grid-auto-flow: column;
`

const Shortcut = styled.a`
  width: 74px;
  display: flex;
  flex-direction: column;
  align-items: center;
  padding-top: 7px;
  color: #fff;
  text-align: center;
  text-shadow: 0 1px 2px rgba(0, 30, 70, .6);

  span {
    width: 72px;
    margin-top: 3px;
  }
`

const Window = styled.section`
  position: absolute;
  inset: 119px 30px 56px 205px;
  display: flex;
  flex-direction: column;
  background: #fff;
  border-left: 1px solid #bfe9fb;
`

const TitleBar = styled.header`
  display: flex;
  align-items: center;
  height: 31px;

  h1 { flex: 1; }
`

const QuickBar = styled.div`
  display: flex;
  align-items: center;
  gap: 6px;
  padding: 0 5px 0 8px;
`

const MenuMark = styled.svg`
  margin-left: 1px;
`

const Tick = styled.span`
  width: 1px;
  height: 12px;
  margin: 0 2px;
  background: #8a8a8a;
`

const Caret = styled.i`
  display: inline-block;
  width: 7px;
  height: 4px;
  vertical-align: middle;
  background: #222;
  clip-path: polygon(0 0, 100% 0, 50% 100%);
`

const Controls = styled.div`
  display: flex;
  align-self: stretch;
  padding-right: 1px;

  button {
    width: 46px;
    display: grid;
    place-items: center;
  }
`

const Tabs = styled.div`
  display: flex;
  height: 24px;
  border-bottom: 1px solid #dadbdc;
`

const Tab = styled.button`
  width: ${({ $open }) => ($open ? 58 : 56)}px;
  height: ${({ $open }) => ($open ? 24 : 23)}px;
  padding-bottom: ${({ $open }) => ($open ? 2 : 0)}px;
  color: ${({ $file }) => ($file ? '#fff' : '#333')};
  background: ${({ $file, $open }) => ($file ? '#0563b1' : $open ? '#f5f6f7' : 'none')};
  border: ${({ $open }) => ($open ? '1px solid #dadbdc' : '0')};
  border-bottom: 0;
`

const Help = styled.div`
  display: flex;
  align-items: center;
  gap: 8px;
  margin-left: auto;
  padding-right: 4px;

  button {
    width: 16px;
    height: 16px;
    border-radius: 50%;
    background: #0f66b8;
    color: #fff;
    font-weight: 700;
  }
`

const RibbonBar = styled.div`
  display: flex;
  height: 92px;
  background: #f5f6f7;
  border-bottom: 1px solid #dadbdc;
  overflow: hidden;
`

const Group = styled.div`
  display: flex;
  flex-direction: column;
  padding: 3px 6px 0 5px;
  margin-bottom: 2px;
  border-right: 1px solid #e0e1e3;
`

const GroupBody = styled.div`
  display: flex;
  flex: 1;
`

const GroupName = styled.div`
  line-height: 14px;
  text-align: center;
  color: #5a5a5a;
`

const BigButton = styled.button`
  width: ${({ $width }) => $width}px;
  display: flex;
  flex-direction: column;
  align-items: center;
  padding-top: 4px;
  line-height: 13px;
  color: #333;
  white-space: nowrap;

  svg { margin-bottom: 3px; }
  span > i { margin-left: 3px; }
  > i { margin-top: 4px; }
`

const BigPin = styled.span`
  height: 35px;
  padding-top: 6px;
`

const Divider = styled.span`
  width: 1px;
  height: 56px;
  margin: 4px 3px 0;
  background: #e0e1e3;
`

const Stack = styled.div`
  width: ${({ $width }) => $width}px;
  margin-left: ${({ $gap }) => $gap}px;
  display: flex;
  flex-direction: column;
`

const SmallButton = styled.button`
  display: flex;
  align-items: center;
  gap: 3px;
  height: 22px;
  color: ${({ $dim }) => ($dim ? '#8a8a8a' : '#333')};
  white-space: nowrap;
`

const AddressRow = styled.div`
  display: flex;
  align-items: center;
  height: 34px;
  padding-right: 13px;
`

const Arrows = styled.div`
  display: flex;
  align-items: center;
  justify-content: space-between;
  width: 106px;
  padding: 0 6px 0 12px;
`

const Address = styled.div`
  flex: 1;
  display: flex;
  align-items: center;
  gap: 4px;
  height: 22px;
  padding-left: 3px;
  border: 1px solid #d9d9d9;

  a { padding: 0 4px 2px; }
`

const AddressEnd = styled.div`
  display: flex;
  align-items: center;
  gap: 2px;
  height: 100%;
  margin-left: auto;

  button {
    width: 18px;
    height: 100%;
    display: grid;
    place-items: center;
    border-left: 1px solid #d9d9d9;
  }
`

const SearchBox = styled.label`
  display: flex;
  align-items: center;
  width: 202px;
  height: 22px;
  margin-left: ${({ $rear }) => ($rear ? 'auto' : '11px')};
  padding: 0 8px;
  border: 1px solid #d9d9d9;

  input {
    flex: 1;
    min-width: 0;
    padding-bottom: 2px;
    outline: 0;
  }
  input::placeholder { color: #6d6d6d; opacity: 1; }
`

const Body = styled.div`
  flex: 1;
  display: flex;
  min-height: 0;
`

const Nav = styled.nav`
  width: 140px;
  padding-top: 9px;
  overflow: hidden;
`

const NavItem = styled.a`
  display: flex;
  align-items: center;
  gap: 5px;
  height: 24px;
  margin-right: 1px;
  padding-left: ${({ $level }) => 24 + $level * 8}px;
  padding-right: 3px;
  background: ${({ $active }) => ($active ? '#d9d9d9' : 'none')};

  span { flex: 1; padding-bottom: 2px; white-space: nowrap; }
`

const NavGap = styled.div`
  height: 8px;
`

const Scroll = styled.div`
  width: 16px;
  display: flex;
  flex-direction: column;
  align-items: center;
  gap: 2px;
  padding: 4px 0 3px;
  background: #f0f0f0;

  svg:last-child { margin-top: auto; }
`

const Thumb = styled.div`
  width: 100%;
  height: 106px;
  background: #cdcdcd;
`

const FilePane = styled.div`
  flex: 1;
  padding-left: 17px;
  border-left: 1px solid #f6f6f6;
`

const FileTable = styled.table`
  width: 602px;
  table-layout: fixed;
  border-spacing: 0;

  th {
    position: relative;
    height: 27px;
    padding: 0 6px 1px;
    text-align: left;
    font-weight: 400;
    color: #4c607a;
    border-right: 1px solid #e5e5e5;
  }
  th:first-child { width: 258px; padding-left: 3px; }
  th:nth-child(2) { width: 144px; }
  th:nth-child(3) { width: 120px; }
  th:nth-child(4) { width: 76px; border-right: 0; }
  th:last-child { padding: 0; }
  thead::after { content: ''; display: block; height: 5px; }
`

const SortMark = styled.span`
  position: absolute;
  top: -2px;
  left: 49%;
  transform: translateX(-50%);
`

const FileRow = styled.tr`
  td {
    height: 21px;
    padding: 0 6px;
    color: #6d6d6d;
    background: ${({ $picked }) => ($picked ? '#cce8ff' : 'none')};
    border: 0 solid #99d1ff;
    border-width: ${({ $picked }) => ($picked ? '1px 0' : '0')};
  }
  td:first-child {
    padding-left: ${({ $picked }) => ($picked ? 4 : 5)}px;
    color: #000;
    border-left-width: ${({ $picked }) => ($picked ? 1 : 0)}px;
  }
  td:last-child { border-right-width: ${({ $picked }) => ($picked ? 1 : 0)}px; }
`

const Entry = styled.span`
  display: flex;
  align-items: center;
  gap: 3px;
`

const Status = styled.footer`
  display: flex;
  align-items: center;
  gap: 21px;
  height: 24px;
  padding: 0 5px 2px 14px;
  color: #1e395b;
`

const Views = styled.div`
  display: flex;
  margin-left: auto;
`

const ViewButton = styled.button`
  width: 22px;
  height: 22px;
  display: grid;
  place-items: center;
  border: ${({ $on }) => ($on ? '1px solid #3a9bd6' : '0')};
  background: ${({ $on }) => ($on ? '#cde8f8' : 'none')};
`

const RearWindow = styled.section`
  position: absolute;
  inset: 371px -175px 0 424px;
  display: flex;
  flex-direction: column;
  background: #fff;
`

const RearTop = styled.div`
  height: 54px;
  border-bottom: 1px solid #dadbdc;
`

const RearRibbon = styled.div`
  height: 92px;
  background: #f5f6f7;
  border-bottom: 1px solid #dadbdc;
`

const RearAddress = styled.div`
  display: flex;
  align-items: center;
  height: 34px;
`

const RearNav = styled.nav`
  width: 140px;
  display: flex;
  flex-direction: column;
  justify-content: flex-end;
  padding: 0 0 1px 40px;
  overflow: hidden;
`

const RearItem = styled.a`
  display: flex;
  align-items: center;
  gap: 5px;
  height: 24px;
  white-space: nowrap;
`

const Watermark = styled.div`
  position: absolute;
  right: 47px;
  bottom: 48px;
  display: flex;
  align-items: center;
  gap: 5px;
  color: #fff;
  font: 34px/64px Roboto, sans-serif;
  text-shadow: 0 0 4px rgba(0, 0, 0, .35);

  svg { filter: drop-shadow(0 0 2px rgba(0, 0, 0, .3)); }
`

const Bar = styled.footer`
  position: absolute;
  inset: auto 0 0 0;
  display: flex;
  height: 40px;
  background: rgba(0, 0, 0, .85);
  color: #fff;
`

const TaskButton = styled.button`
  position: relative;
  width: 48px;
  height: 40px;
  display: grid;
  place-items: center;
  background: ${({ $active }) => ($active ? 'rgba(255, 255, 255, .2)' : 'none')};

  &::after {
    content: '';
    display: ${({ $active, $running }) => ($active || $running ? 'block' : 'none')};
    position: absolute;
    bottom: 0;
    left: ${({ $active }) => ($active ? 0 : 4)}px;
    right: ${({ $active }) => ($active ? 0 : 4)}px;
    height: 2px;
    background: #76b9ed;
  }
`

const TaskSearch = styled.label`
  display: flex;
  align-items: center;
  gap: 12px;
  width: 288px;
  padding: 0 2px 0 12px;
  background: #f2f2f2;
  color: #222;

  input {
    flex: 1;
    min-width: 0;
    font-size: 14px;
    outline: 0;
  }
  input::placeholder { color: #333; opacity: 1; }
`

const Apps = styled.div`
  display: flex;
  gap: 1px;
  margin-left: 3px;
`

const Tray = styled.div`
  display: flex;
  align-items: center;
  margin: 0 4px 0 auto;
  border-right: 1px solid #6a6a6a;

  button {
    width: 24px;
    height: 40px;
    display: grid;
    place-items: center;
  }
`

const Clock = styled.time`
  display: flex;
  flex-direction: column;
  width: 56px;
  margin-left: 4px;
  text-align: center;
  line-height: 18px;
`

const NoteButton = styled.button`
  && { width: 48px; margin-right: 4px; }
`
